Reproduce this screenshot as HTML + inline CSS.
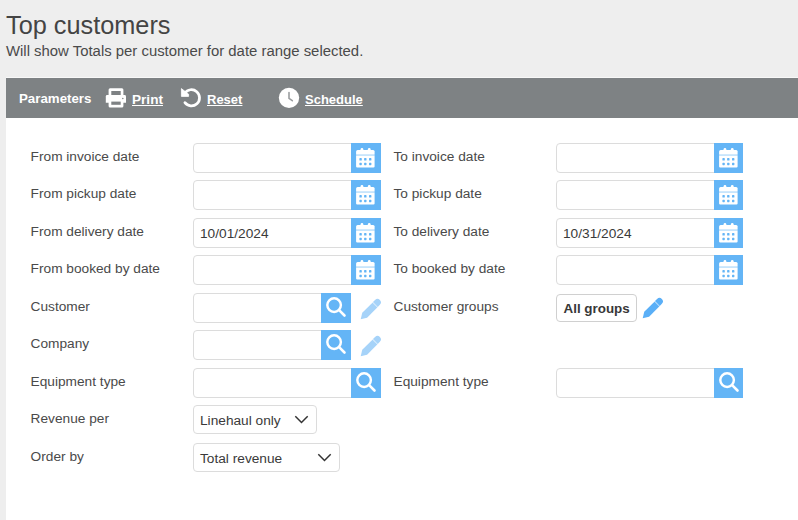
<!DOCTYPE html>
<html><head><meta charset="utf-8">
<style>
html,body{margin:0;padding:0;}
body{width:798px;height:520px;overflow:hidden;background:#eeeeee;position:relative;font-family:"Liberation Sans",sans-serif;color:#444;}
.abs{position:absolute;white-space:nowrap;}
.abs>svg{display:block;}
h1{position:absolute;margin:0;left:6px;top:9.2px;font-size:25.3px;font-weight:normal;color:#444;line-height:32px;white-space:nowrap;}
.sub{left:6px;top:41px;font-size:14.9px;line-height:20px;color:#4a4a4a;}
.panel{position:absolute;left:6px;top:77px;width:792px;height:443px;background:#fff;border-top:0;}
.tl{position:absolute;left:6px;top:77px;width:792px;height:1px;background:#f8f8f8;}
.bar{position:absolute;left:6px;top:78px;width:792px;height:40px;background:#7e8284;}
.bt{color:#fff;font-weight:bold;font-size:13px;line-height:16px;}
.lnk{text-decoration:underline;text-underline-offset:1.3px;}
.lbl{font-size:13.7px;line-height:18px;color:#4a4a4a;}
.inp{position:absolute;height:28px;border:1px solid #dcdcdc;border-radius:4px;background:#fff;box-sizing:content-box;}
.btn{position:absolute;width:30px;height:30px;background:#64b5f6;}
.btn svg{position:absolute;left:0;top:0;}
.val{font-size:13.7px;line-height:18px;color:#3a3a3a;}
.grp{box-sizing:border-box;width:81px;height:28px;border:1px solid #d0d0d0;border-radius:4px;background:#fff;font-weight:bold;font-size:13.4px;line-height:27.5px;padding-left:6.5px;color:#383838;}
</style></head>
<body>
<h1>Top customers</h1>
<div class="abs sub">Will show Totals per customer for date range selected.</div>
<div class="panel"></div>
<div class="tl"></div>
<div class="bar"></div>
<div class="abs bt" style="left:19px;top:90.6px;font-size:13.3px">Parameters</div>
<svg class="abs" style="left:103px;top:85px" width="26" height="26" viewBox="0 0 26 26"><g fill="#fff"><path d="M5.6 4.8a1.5 1.5 0 0 1 1.5-1.5h11.8a1.5 1.5 0 0 1 1.5 1.5V10.5H5.6z"/><path d="M2.8 11.4a1.4 1.4 0 0 1 1.4-1.4h17.4a1.4 1.4 0 0 1 1.4 1.4V17.7H2.8z"/><path d="M5.6 15H20.4V21a1.5 1.5 0 0 1-1.5 1.5H7.1a1.5 1.5 0 0 1-1.5-1.5z"/></g><g fill="#7e8284"><rect x="8.3" y="6" width="9.4" height="4"/><rect x="8.3" y="16.6" width="9.4" height="3.2"/><circle cx="19.8" cy="13.4" r="0.75"/></g></svg>
<div class="abs bt lnk" style="left:132px;top:91.6px;font-size:13.6px">Print</div>
<svg class="abs" style="left:177px;top:85px" width="26" height="26" viewBox="0 0 26 26"><path fill="none" stroke="#fff" stroke-width="2.75" stroke-linecap="round" d="M7.77 8.15A8.1 8.1 0 1 1 7.93 17.67"/><path fill="#fff" stroke="#fff" stroke-width="0.8" stroke-linejoin="round" d="M4.4 3.6V11.4H11.6V9.2Z"/></svg>
<div class="abs bt lnk" style="left:207px;top:92px;">Reset</div>
<svg class="abs" style="left:276px;top:84px" width="26" height="26" viewBox="0 0 26 26"><circle cx="13" cy="13.85" r="10.2" fill="#fff"/><path d="M13 8.6V14.3L16.3 16.7" stroke="#9a9d9f" stroke-width="1.6" fill="none" stroke-linecap="round"/></svg>
<div class="abs bt lnk" style="left:305px;top:92px;">Schedule</div>
<div class="abs lbl" style="left:30.6px;top:147.8px">From invoice date</div>
<div class="inp" style="left:193px;top:143.0px;width:163px"></div>
<div class="btn" style="left:351px;top:143.0px;width:30px"><svg width="30" height="30" viewBox="0 0 30 30"><g fill="#fff">
<rect x="9.6" y="5" width="2.7" height="4" rx="1.3"/><rect x="16.9" y="5" width="2.7" height="4" rx="1.3"/>
<path d="M5.1 8.5a1.5 1.5 0 0 1 1.5-1.5h15.5a1.5 1.5 0 0 1 1.5 1.5V10.9H5.1z"/>
<rect x="5.1" y="10.9" width="18.5" height="1.5" opacity="0.7"/>
<path d="M5.1 12.4H23.6V23.5a1.1 1.1 0 0 1-1.1 1.1H6.2a1.1 1.1 0 0 1-1.1-1.1z"/>
</g><rect x="8.4" y="15.100000000000001" width="2.4" height="2.4" rx="0.6" fill="#64b5f6"/><rect x="13.100000000000001" y="15.100000000000001" width="2.4" height="2.4" rx="0.6" fill="#64b5f6"/><rect x="18.0" y="15.100000000000001" width="2.4" height="2.4" rx="0.6" fill="#64b5f6"/><rect x="8.4" y="19.8" width="2.4" height="2.4" rx="0.6" fill="#64b5f6"/><rect x="13.100000000000001" y="19.8" width="2.4" height="2.4" rx="0.6" fill="#64b5f6"/><rect x="18.0" y="19.8" width="2.4" height="2.4" rx="0.6" fill="#64b5f6"/></svg></div>
<div class="abs lbl" style="left:393.5px;top:147.8px">To invoice date</div>
<div class="inp" style="left:556px;top:143.0px;width:163px"></div>
<div class="btn" style="left:714px;top:143.0px;width:29px"><svg width="30" height="30" viewBox="0 0 30 30"><g fill="#fff">
<rect x="9.6" y="5" width="2.7" height="4" rx="1.3"/><rect x="16.9" y="5" width="2.7" height="4" rx="1.3"/>
<path d="M5.1 8.5a1.5 1.5 0 0 1 1.5-1.5h15.5a1.5 1.5 0 0 1 1.5 1.5V10.9H5.1z"/>
<rect x="5.1" y="10.9" width="18.5" height="1.5" opacity="0.7"/>
<path d="M5.1 12.4H23.6V23.5a1.1 1.1 0 0 1-1.1 1.1H6.2a1.1 1.1 0 0 1-1.1-1.1z"/>
</g><rect x="8.4" y="15.100000000000001" width="2.4" height="2.4" rx="0.6" fill="#64b5f6"/><rect x="13.100000000000001" y="15.100000000000001" width="2.4" height="2.4" rx="0.6" fill="#64b5f6"/><rect x="18.0" y="15.100000000000001" width="2.4" height="2.4" rx="0.6" fill="#64b5f6"/><rect x="8.4" y="19.8" width="2.4" height="2.4" rx="0.6" fill="#64b5f6"/><rect x="13.100000000000001" y="19.8" width="2.4" height="2.4" rx="0.6" fill="#64b5f6"/><rect x="18.0" y="19.8" width="2.4" height="2.4" rx="0.6" fill="#64b5f6"/></svg></div>
<div class="abs lbl" style="left:30.6px;top:184.8px">From pickup date</div>
<div class="inp" style="left:193px;top:180.0px;width:163px"></div>
<div class="btn" style="left:351px;top:180.0px;width:30px"><svg width="30" height="30" viewBox="0 0 30 30"><g fill="#fff">
<rect x="9.6" y="5" width="2.7" height="4" rx="1.3"/><rect x="16.9" y="5" width="2.7" height="4" rx="1.3"/>
<path d="M5.1 8.5a1.5 1.5 0 0 1 1.5-1.5h15.5a1.5 1.5 0 0 1 1.5 1.5V10.9H5.1z"/>
<rect x="5.1" y="10.9" width="18.5" height="1.5" opacity="0.7"/>
<path d="M5.1 12.4H23.6V23.5a1.1 1.1 0 0 1-1.1 1.1H6.2a1.1 1.1 0 0 1-1.1-1.1z"/>
</g><rect x="8.4" y="15.100000000000001" width="2.4" height="2.4" rx="0.6" fill="#64b5f6"/><rect x="13.100000000000001" y="15.100000000000001" width="2.4" height="2.4" rx="0.6" fill="#64b5f6"/><rect x="18.0" y="15.100000000000001" width="2.4" height="2.4" rx="0.6" fill="#64b5f6"/><rect x="8.4" y="19.8" width="2.4" height="2.4" rx="0.6" fill="#64b5f6"/><rect x="13.100000000000001" y="19.8" width="2.4" height="2.4" rx="0.6" fill="#64b5f6"/><rect x="18.0" y="19.8" width="2.4" height="2.4" rx="0.6" fill="#64b5f6"/></svg></div>
<div class="abs lbl" style="left:393.5px;top:184.8px">To pickup date</div>
<div class="inp" style="left:556px;top:180.0px;width:163px"></div>
<div class="btn" style="left:714px;top:180.0px;width:29px"><svg width="30" height="30" viewBox="0 0 30 30"><g fill="#fff">
<rect x="9.6" y="5" width="2.7" height="4" rx="1.3"/><rect x="16.9" y="5" width="2.7" height="4" rx="1.3"/>
<path d="M5.1 8.5a1.5 1.5 0 0 1 1.5-1.5h15.5a1.5 1.5 0 0 1 1.5 1.5V10.9H5.1z"/>
<rect x="5.1" y="10.9" width="18.5" height="1.5" opacity="0.7"/>
<path d="M5.1 12.4H23.6V23.5a1.1 1.1 0 0 1-1.1 1.1H6.2a1.1 1.1 0 0 1-1.1-1.1z"/>
</g><rect x="8.4" y="15.100000000000001" width="2.4" height="2.4" rx="0.6" fill="#64b5f6"/><rect x="13.100000000000001" y="15.100000000000001" width="2.4" height="2.4" rx="0.6" fill="#64b5f6"/><rect x="18.0" y="15.100000000000001" width="2.4" height="2.4" rx="0.6" fill="#64b5f6"/><rect x="8.4" y="19.8" width="2.4" height="2.4" rx="0.6" fill="#64b5f6"/><rect x="13.100000000000001" y="19.8" width="2.4" height="2.4" rx="0.6" fill="#64b5f6"/><rect x="18.0" y="19.8" width="2.4" height="2.4" rx="0.6" fill="#64b5f6"/></svg></div>
<div class="abs lbl" style="left:30.6px;top:222.8px">From delivery date</div>
<div class="inp" style="left:193px;top:218.0px;width:163px"></div>
<div class="abs val" style="left:200px;top:224.8px">10/01/2024</div>
<div class="btn" style="left:351px;top:218.0px;width:30px"><svg width="30" height="30" viewBox="0 0 30 30"><g fill="#fff">
<rect x="9.6" y="5" width="2.7" height="4" rx="1.3"/><rect x="16.9" y="5" width="2.7" height="4" rx="1.3"/>
<path d="M5.1 8.5a1.5 1.5 0 0 1 1.5-1.5h15.5a1.5 1.5 0 0 1 1.5 1.5V10.9H5.1z"/>
<rect x="5.1" y="10.9" width="18.5" height="1.5" opacity="0.7"/>
<path d="M5.1 12.4H23.6V23.5a1.1 1.1 0 0 1-1.1 1.1H6.2a1.1 1.1 0 0 1-1.1-1.1z"/>
</g><rect x="8.4" y="15.100000000000001" width="2.4" height="2.4" rx="0.6" fill="#64b5f6"/><rect x="13.100000000000001" y="15.100000000000001" width="2.4" height="2.4" rx="0.6" fill="#64b5f6"/><rect x="18.0" y="15.100000000000001" width="2.4" height="2.4" rx="0.6" fill="#64b5f6"/><rect x="8.4" y="19.8" width="2.4" height="2.4" rx="0.6" fill="#64b5f6"/><rect x="13.100000000000001" y="19.8" width="2.4" height="2.4" rx="0.6" fill="#64b5f6"/><rect x="18.0" y="19.8" width="2.4" height="2.4" rx="0.6" fill="#64b5f6"/></svg></div>
<div class="abs lbl" style="left:393.5px;top:222.8px">To delivery date</div>
<div class="inp" style="left:556px;top:218.0px;width:163px"></div>
<div class="abs val" style="left:563px;top:224.8px">10/31/2024</div>
<div class="btn" style="left:714px;top:218.0px;width:29px"><svg width="30" height="30" viewBox="0 0 30 30"><g fill="#fff">
<rect x="9.6" y="5" width="2.7" height="4" rx="1.3"/><rect x="16.9" y="5" width="2.7" height="4" rx="1.3"/>
<path d="M5.1 8.5a1.5 1.5 0 0 1 1.5-1.5h15.5a1.5 1.5 0 0 1 1.5 1.5V10.9H5.1z"/>
<rect x="5.1" y="10.9" width="18.5" height="1.5" opacity="0.7"/>
<path d="M5.1 12.4H23.6V23.5a1.1 1.1 0 0 1-1.1 1.1H6.2a1.1 1.1 0 0 1-1.1-1.1z"/>
</g><rect x="8.4" y="15.100000000000001" width="2.4" height="2.4" rx="0.6" fill="#64b5f6"/><rect x="13.100000000000001" y="15.100000000000001" width="2.4" height="2.4" rx="0.6" fill="#64b5f6"/><rect x="18.0" y="15.100000000000001" width="2.4" height="2.4" rx="0.6" fill="#64b5f6"/><rect x="8.4" y="19.8" width="2.4" height="2.4" rx="0.6" fill="#64b5f6"/><rect x="13.100000000000001" y="19.8" width="2.4" height="2.4" rx="0.6" fill="#64b5f6"/><rect x="18.0" y="19.8" width="2.4" height="2.4" rx="0.6" fill="#64b5f6"/></svg></div>
<div class="abs lbl" style="left:30.6px;top:259.8px">From booked by date</div>
<div class="inp" style="left:193px;top:255.0px;width:163px"></div>
<div class="btn" style="left:351px;top:255.0px;width:30px"><svg width="30" height="30" viewBox="0 0 30 30"><g fill="#fff">
<rect x="9.6" y="5" width="2.7" height="4" rx="1.3"/><rect x="16.9" y="5" width="2.7" height="4" rx="1.3"/>
<path d="M5.1 8.5a1.5 1.5 0 0 1 1.5-1.5h15.5a1.5 1.5 0 0 1 1.5 1.5V10.9H5.1z"/>
<rect x="5.1" y="10.9" width="18.5" height="1.5" opacity="0.7"/>
<path d="M5.1 12.4H23.6V23.5a1.1 1.1 0 0 1-1.1 1.1H6.2a1.1 1.1 0 0 1-1.1-1.1z"/>
</g><rect x="8.4" y="15.100000000000001" width="2.4" height="2.4" rx="0.6" fill="#64b5f6"/><rect x="13.100000000000001" y="15.100000000000001" width="2.4" height="2.4" rx="0.6" fill="#64b5f6"/><rect x="18.0" y="15.100000000000001" width="2.4" height="2.4" rx="0.6" fill="#64b5f6"/><rect x="8.4" y="19.8" width="2.4" height="2.4" rx="0.6" fill="#64b5f6"/><rect x="13.100000000000001" y="19.8" width="2.4" height="2.4" rx="0.6" fill="#64b5f6"/><rect x="18.0" y="19.8" width="2.4" height="2.4" rx="0.6" fill="#64b5f6"/></svg></div>
<div class="abs lbl" style="left:393.5px;top:259.8px">To booked by date</div>
<div class="inp" style="left:556px;top:255.0px;width:163px"></div>
<div class="btn" style="left:714px;top:255.0px;width:29px"><svg width="30" height="30" viewBox="0 0 30 30"><g fill="#fff">
<rect x="9.6" y="5" width="2.7" height="4" rx="1.3"/><rect x="16.9" y="5" width="2.7" height="4" rx="1.3"/>
<path d="M5.1 8.5a1.5 1.5 0 0 1 1.5-1.5h15.5a1.5 1.5 0 0 1 1.5 1.5V10.9H5.1z"/>
<rect x="5.1" y="10.9" width="18.5" height="1.5" opacity="0.7"/>
<path d="M5.1 12.4H23.6V23.5a1.1 1.1 0 0 1-1.1 1.1H6.2a1.1 1.1 0 0 1-1.1-1.1z"/>
</g><rect x="8.4" y="15.100000000000001" width="2.4" height="2.4" rx="0.6" fill="#64b5f6"/><rect x="13.100000000000001" y="15.100000000000001" width="2.4" height="2.4" rx="0.6" fill="#64b5f6"/><rect x="18.0" y="15.100000000000001" width="2.4" height="2.4" rx="0.6" fill="#64b5f6"/><rect x="8.4" y="19.8" width="2.4" height="2.4" rx="0.6" fill="#64b5f6"/><rect x="13.100000000000001" y="19.8" width="2.4" height="2.4" rx="0.6" fill="#64b5f6"/><rect x="18.0" y="19.8" width="2.4" height="2.4" rx="0.6" fill="#64b5f6"/></svg></div>
<div class="abs lbl" style="left:30.6px;top:297.8px">Customer</div>
<div class="inp" style="left:193px;top:293.0px;width:131px"></div>
<div class="btn" style="left:321px;top:293.0px;width:30px"><svg width="30" height="30" viewBox="0 0 30 30"><circle cx="13.1" cy="12.1" r="6.8" fill="none" stroke="#fff" stroke-width="2.45"/><path d="M18.1 17.1l5.4 5.4" stroke="#fff" stroke-width="2.6" stroke-linecap="round"/></svg></div>
<div class="abs" style="left:357px;top:295.0px"><svg width="28" height="28" viewBox="0 0 28 28"><g transform="translate(3.7 24.2) rotate(-45)" fill="#a6d3f9"><path d="M0 0L5.6 -3.4H20V3.4H5.6Z"/><rect x="20" y="-3.4" width="0.8" height="6.8" opacity="0.5"/><path d="M20.8 -3.4H23.7A3.4 3.4 0 0 1 23.7 3.4H20.8Z"/></g></svg></div>
<div class="abs lbl" style="left:393.5px;top:297.8px">Customer groups</div>
<div class="abs grp" style="left:556px;top:294.0px">All groups</div>
<div class="abs" style="left:638.5px;top:293.5px"><svg width="28" height="28" viewBox="0 0 28 28"><g transform="translate(3.7 24.2) rotate(-45)" fill="#5aaff7"><path d="M0 0L5.6 -3.4H20V3.4H5.6Z"/><rect x="20" y="-3.4" width="0.8" height="6.8" opacity="0.5"/><path d="M20.8 -3.4H23.7A3.4 3.4 0 0 1 23.7 3.4H20.8Z"/></g></svg></div>
<div class="abs lbl" style="left:30.6px;top:334.8px">Company</div>
<div class="inp" style="left:193px;top:330.0px;width:131px"></div>
<div class="btn" style="left:321px;top:330.0px;width:30px"><svg width="30" height="30" viewBox="0 0 30 30"><circle cx="13.1" cy="12.1" r="6.8" fill="none" stroke="#fff" stroke-width="2.45"/><path d="M18.1 17.1l5.4 5.4" stroke="#fff" stroke-width="2.6" stroke-linecap="round"/></svg></div>
<div class="abs" style="left:357px;top:332.0px"><svg width="28" height="28" viewBox="0 0 28 28"><g transform="translate(3.7 24.2) rotate(-45)" fill="#a6d3f9"><path d="M0 0L5.6 -3.4H20V3.4H5.6Z"/><rect x="20" y="-3.4" width="0.8" height="6.8" opacity="0.5"/><path d="M20.8 -3.4H23.7A3.4 3.4 0 0 1 23.7 3.4H20.8Z"/></g></svg></div>
<div class="abs lbl" style="left:30.6px;top:372.8px">Equipment type</div>
<div class="inp" style="left:193px;top:368.0px;width:161px"></div>
<div class="btn" style="left:351px;top:368.0px;width:30px"><svg width="30" height="30" viewBox="0 0 30 30"><circle cx="13.1" cy="12.1" r="6.8" fill="none" stroke="#fff" stroke-width="2.45"/><path d="M18.1 17.1l5.4 5.4" stroke="#fff" stroke-width="2.6" stroke-linecap="round"/></svg></div>
<div class="abs lbl" style="left:393.5px;top:372.8px">Equipment type</div>
<div class="inp" style="left:556px;top:368.0px;width:161px"></div>
<div class="btn" style="left:714px;top:368.0px;width:29px"><svg width="30" height="30" viewBox="0 0 30 30"><circle cx="13.1" cy="12.1" r="6.8" fill="none" stroke="#fff" stroke-width="2.45"/><path d="M18.1 17.1l5.4 5.4" stroke="#fff" stroke-width="2.6" stroke-linecap="round"/></svg></div>
<div class="abs lbl" style="left:30.6px;top:409.8px">Revenue per</div>
<div class="inp sel" style="left:193px;top:405.0px;width:122px;height:27px"></div>
<div class="abs val" style="left:200px;top:412.0px">Linehaul only</div>
<div class="abs" style="left:293.5px;top:414.5px"><svg width="15" height="10" viewBox="0 0 15 10"><path d="M1.3 1.3l6.2 6.2 6.2-6.2" fill="none" stroke="#333" stroke-width="1.5"/></svg></div>
<div class="abs lbl" style="left:30.6px;top:447.8px">Order by</div>
<div class="inp sel" style="left:193px;top:443.0px;width:145px;height:27px"></div>
<div class="abs val" style="left:200px;top:450.0px">Total revenue</div>
<div class="abs" style="left:317px;top:452.5px"><svg width="15" height="10" viewBox="0 0 15 10"><path d="M1.3 1.3l6.2 6.2 6.2-6.2" fill="none" stroke="#333" stroke-width="1.5"/></svg></div>
</body></html>
